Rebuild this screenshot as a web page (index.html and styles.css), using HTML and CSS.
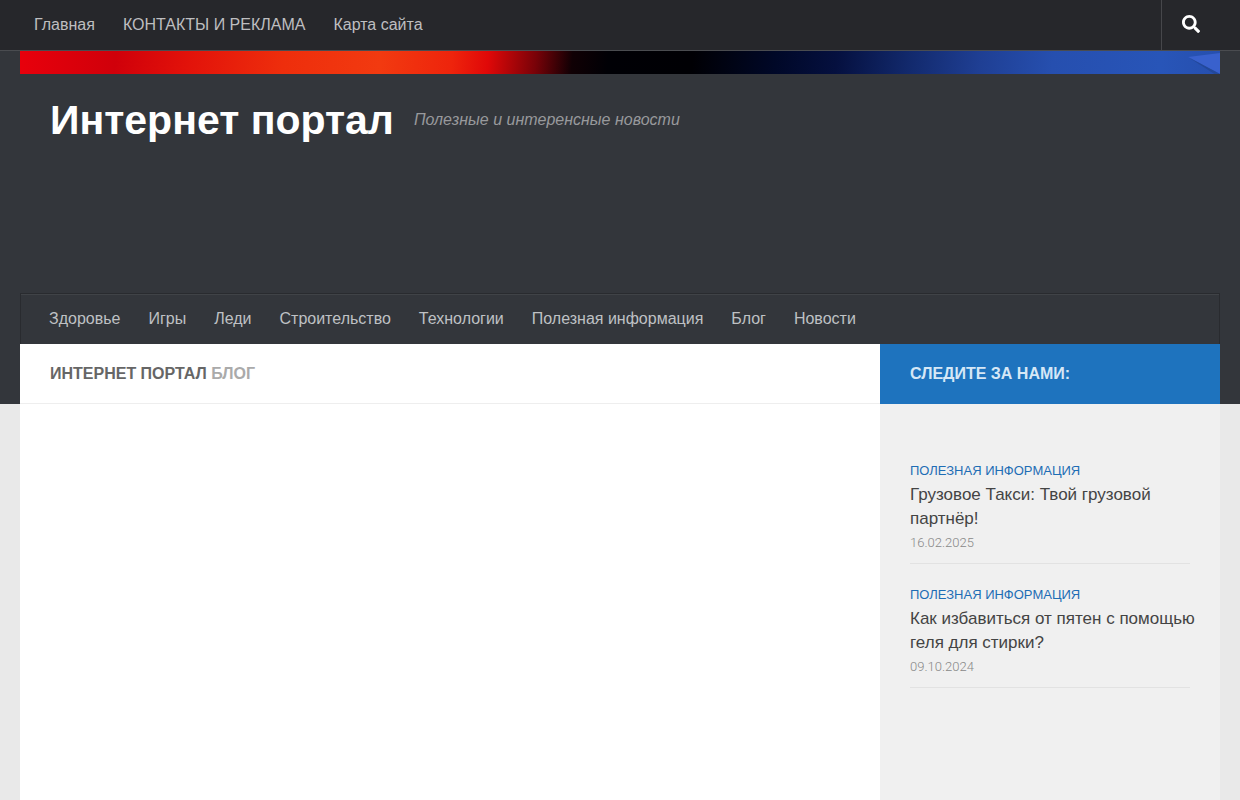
FILE: index.html
```
<!DOCTYPE html>
<html lang="ru">
<head>
<meta charset="utf-8">
<meta name="viewport" content="width=device-width, initial-scale=1">
<title>Интернет портал</title>
<link rel="stylesheet" href="styles.css">
</head>
<body>
<nav class="topbar" aria-label="Верхнее меню">
  <ul class="menu">
    <li><a href="#">Главная</a></li>
    <li><a href="#">КОНТАКТЫ И РЕКЛАМА</a></li>
    <li><a href="#">Карта сайта</a></li>
  </ul>
  <button class="search" type="button" aria-label="Поиск">
    <svg viewBox="0 0 512 512" width="18" height="18" aria-hidden="true"><path fill="currentColor" d="M505 442.700 405.300 343c-4.500-4.500-10.600-7-17-7H372c27.600-35.300 44-79.700 44-128C416 93.100 322.900 0 208 0S0 93.100 0 208s93.100 208 208 208c48.300 0 92.700-16.400 128-44v16.300c0 6.400 2.500 12.500 7 17l99.700 99.700c9.400 9.400 24.600 9.400 33.900 0l28.300-28.300c9.400-9.400 9.400-24.600.1-34zM208 336c-70.700 0-128-57.200-128-128 0-70.700 57.200-128 128-128 70.700 0 128 57.200 128 128 0 70.700-57.200 128-128 128z"/></svg>
  </button>
</nav>
<header class="header">
  <div class="banner">
    <svg class="facet" viewBox="0 0 32 24" width="32" height="24" aria-hidden="true"><path fill="#3961cd" d="M0 6 32 2V23z"/><path fill="#234899" d="M0 6 32 23V24H28z"/></svg>
  </div>
  <div class="branding">
    <p class="site-title"><a href="#">Интернет портал</a></p>
    <p class="tagline">Полезные и интеренсные новости</p>
  </div>
  <nav class="mainnav" aria-label="Рубрики">
    <ul class="menu">
      <li><a href="#">Здоровье</a></li>
      <li><a href="#">Игры</a></li>
      <li><a href="#">Леди</a></li>
      <li><a href="#">Строительство</a></li>
      <li><a href="#">Технологии</a></li>
      <li><a href="#">Полезная информация</a></li>
      <li><a href="#">Блог</a></li>
      <li><a href="#">Новости</a></li>
    </ul>
  </nav>
</header>
<div class="page">
  <main class="content">
    <h1 class="page-title">ИНТЕРНЕТ ПОРТАЛ <span>БЛОГ</span></h1>
  </main>
  <aside class="sidebar">
    <h2 class="follow">СЛЕДИТЕ ЗА НАМИ:</h2>
    <ul class="posts">
      <li>
        <a class="category" href="#">ПОЛЕЗНАЯ ИНФОРМАЦИЯ</a>
        <a class="post" href="#">Грузовое Такси: Твой грузовой партнёр!</a>
        <time datetime="2025-02-16">16.02.2025</time>
      </li>
      <li>
        <a class="category" href="#">ПОЛЕЗНАЯ ИНФОРМАЦИЯ</a>
        <a class="post" href="#">Как избавиться от пятен с помощью геля для стирки?</a>
        <time datetime="2024-10-09">09.10.2024</time>
      </li>
    </ul>
  </aside>
</div>
</body>
</html>
```
FILE: styles.css
```
* { box-sizing: border-box; }
body {
  margin: 0;
  min-height: 100vh;
  display: flex;
  flex-direction: column;
  background: #e9e9e9;
  font: 16px/24px "Liberation Sans", Arial, sans-serif;
}
a { color: inherit; text-decoration: none; }
p, h1, h2, ul { margin: 0; padding: 0; }
ul { list-style: none; }

.topbar {
  display: flex;
  justify-content: space-between;
  background: #26272b;
  border-bottom: 1px solid #4a4c50;
  padding: 0 20px;
  color: #bebec0;
}
.menu { display: flex; }
.menu a { display: block; padding: 13px 14px; }
.search {
  width: 59px;
  padding: 0;
  border: 0;
  border-left: 1px solid #46474b;
  background: none;
  color: #fff;
}
.search svg { display: block; margin: 0 auto 2px; }

.header { background: #33363b; padding: 0 20px; }
.banner {
  display: flex;
  justify-content: flex-end;
  height: 23px;
  overflow: hidden;
  background: linear-gradient(95deg, #e8000c 0%, #d0000a 8%, #e2120a 14%, #ee2e0c 22%, #f23a10 30%, #ee240c 36%, #e00808 39%, #780208 43%, #100004 46%, #000005 49%, #000004 56%, #000828 63%, #05103f 68%, #12296c 74%, #1f3f94 80%, #264faf 86%, #2855b8 95%, #264fae 100%);
}
.branding {
  display: flex;
  align-items: center;
  gap: 20px;
  height: 219px;
  padding: 16px 30px 143px;
}
.site-title { font-size: 41px; line-height: 60px; font-weight: 700; color: #fff; }
.tagline { font-style: italic; color: #98999c; }
.mainnav {
  padding: 0 14px;
  border: 1px solid #292b2f;
  border-bottom: 0;
  box-shadow: inset 0 1px #404347;
  color: #bfc1c4;
}

.page {
  flex: 1;
  display: flex;
  padding: 0 20px;
  background: linear-gradient(#33363b 60px, #e9e9e9 60px);
}
.content { flex: 1; background: #fff; }
.page-title, .follow { height: 60px; padding: 18px 30px 17px; font-size: 16px; line-height: 24px; }
.page-title { color: #666; border-bottom: 1px solid #eee; }
.page-title span { color: #aaa; }
.sidebar { width: 340px; background: #f0f0f0; }
.follow { background: #1e73be; color: #d5e7f6; }
.posts { padding: 55px 30px 0; }
.posts li { border-bottom: 1px solid #e2e2e2; padding-bottom: 8px; margin-bottom: 19px; }
.posts a, .posts time { display: block; }
.category { font-size: 13px; color: #1e6db5; }
.post { margin-right: -16px; font-size: 17px; color: #444; }
.posts time { font-family: Roboto, sans-serif; font-weight: 300; font-size: 13px; color: #888; }
```
